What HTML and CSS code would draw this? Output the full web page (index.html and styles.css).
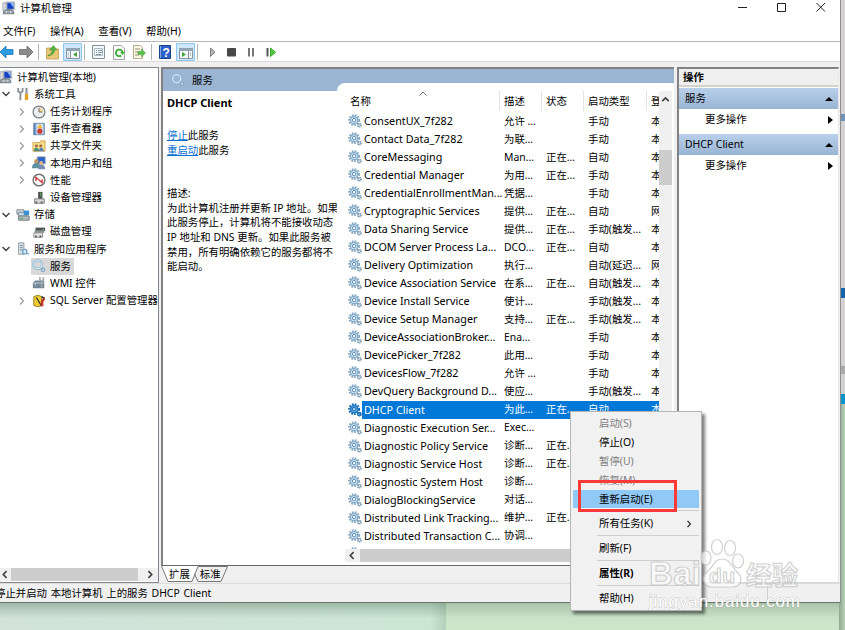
FILE: index.html
```html
<!DOCTYPE html>
<html>
<head>
  <meta charset="UTF-8">
  <title>计算机管理</title>
  <link rel="stylesheet" href="styles.css">
</head>
<body>

  <!-- shared icons -->
  <svg class="defs">
    <symbol id="gear" viewBox="0 0 16 16">
      <circle cx="7" cy="7" r="5.6" fill="none" stroke="#8aa9c0" stroke-width="2.4" stroke-dasharray="1.9 1.4"/>
      <circle cx="7" cy="7" r="4.2" fill="#dcecf7" stroke="#86aecb" stroke-width="1.6"/>
      <circle cx="7" cy="7" r="2" fill="#fff" stroke="#3f78a8"/>
      <circle cx="13" cy="12.8" r="1.9" fill="#d5e5f0" stroke="#6f90aa" stroke-width="1.6" stroke-dasharray="1.2 .5"/>
    </symbol>
    <symbol id="gear-sel" viewBox="0 0 16 16">
      <circle cx="7" cy="7" r="5.6" fill="none" stroke="#1268b0" stroke-width="2.4" stroke-dasharray="1.9 1.4"/>
      <circle cx="7" cy="7" r="4.2" fill="#5fa8df" stroke="#1f78c2" stroke-width="1.6"/>
      <circle cx="7" cy="7" r="2" fill="#a9d4f5" stroke="#0e5ea5"/>
      <circle cx="13" cy="12.8" r="1.9" fill="#5fa8df" stroke="#1268b0" stroke-width="1.6"/>
    </symbol>
    <symbol id="gear-light" viewBox="0 0 16 16">
      <circle cx="6.5" cy="6.5" r="4.8" fill="none" stroke="#86b3d0" stroke-width="2.8"/>
      <circle cx="6.5" cy="6.5" r="4.6" fill="none" stroke="#d6ebf8" stroke-width="1.5"/>
      <circle cx="12.6" cy="12.4" r="2" fill="#c9deec" stroke="#86a8c0" stroke-width="1.4"/>
    </symbol>
    <symbol id="computer" viewBox="0 0 16 16">
      <path d="M1 2h4v9H1z" fill="#d9dcde" stroke="#85898c" stroke-width=".7"/>
      <path d="M5 1h9.500v9H5z" fill="#e1e4e8" stroke="#888" stroke-width=".6"/>
      <path d="M6 2h7.500v7H6z" fill="#1540c0"/>
      <path d="M9 2h4.500v6z" fill="#8db4f4"/>
      <path d="M2 11l3-2h6l3 3v3H1v-3z" fill="#7f8990"/>
      <path d="M3 12.500h9M5 11v3M10 11v3" stroke="#d4dde2"/>
    </symbol>
    <symbol id="open" viewBox="0 0 10 10"><path d="M1.500 3l3.500 3.500L8.500 3" fill="none" stroke="#404040" stroke-width="1.4"/></symbol>
    <symbol id="closed" viewBox="0 0 10 10"><path d="M3 1.500L6.500 5 3 8.500" fill="none" stroke="#9a9a9a" stroke-width="1.2"/></symbol>
  </svg>

  <div class="back-window">
    <div class="strip-top"></div>
    <div class="strip-blue"></div>
    <div class="strip-gray"></div>
    <div class="strip-cyan"></div>
  </div>
  <div class="desktop-left"></div>

  <div class="window">
    <div class="titlebar">
      <svg class="ic"><use href="#computer"/></svg>
      <span>计算机管理</span>
      <svg class="winbtns" viewBox="0 0 90 12" fill="none" stroke="#222">
        <path d="M0 6.500h9"/><path d="M39.500 2.500h8v8h-8z"/><path d="M78.500 2l8.500 8.500M87 2l-8.500 8.500"/>
      </svg>
    </div>
    <div class="menubar"><span>文件(F)</span><span>操作(A)</span><span>查看(V)</span><span>帮助(H)</span></div>

    <div class="toolbar">
      <svg width="290" height="20" viewBox="0 0 290 20">
        <!-- back / forward -->
        <path d="M0 10l6-6v3.500h7v5H6V16z" fill="#2b9be0" stroke="#1c77b8" stroke-width=".8"/>
        <path d="M33 10l-6-6v3.500h-7.500v5H27V16z" fill="#8b8b8b" stroke="#6a6a6a" stroke-width=".8"/>
        <path d="M38.500 2v16M84.500 2v16M151.500 2v16M197.500 2v16" stroke="#b4b4b4"/>
        <!-- up one level -->
        <path d="M46.500 6h5l1 1h6v10h-12z" fill="#e9c877" stroke="#c09a49" stroke-width=".8"/>
        <path d="M48 13q4 0 4-5h-2.500L53.500 3.500 57 8h-2.500q0 5-6.500 6z" fill="#58b447" stroke="#3c8c2d" stroke-width=".5"/>
        <!-- console tree -->
        <path d="M63.500 1.500h18v17h-18z" fill="#d0e7fa" stroke="#8cc5ee"/>
        <path d="M66.500 6.500h13v10h-13z" fill="#f7f9fa" stroke="#8594a0"/>
        <path d="M66 6h14v3H66z" fill="#91a5b4"/><path d="M70.500 9v8M68 11h1M68 13h1M68 15h1" stroke="#7d8f9d"/>
        <path d="M77 10v5l-4-2.500z" fill="#3fa536"/>
        <!-- properties -->
        <path d="M92.500 3.500h12v13h-12z" fill="#f5f8fa" stroke="#82919c"/>
        <path d="M94.500 6.500h8v7h-8z" fill="#fff" stroke="#a9bac7"/>
        <path d="M96 8.500h1M98 8.500h4M96 10.500h1M98 10.500h4M96 12.500h5" stroke="#7f97a9"/>
        <!-- refresh -->
        <path d="M113.500 3.500h8l3 3v11h-11z" fill="#fafafa" stroke="#a5a5a5"/>
        <path d="M122.500 10.500a3.300 3.300 0 1 0-1.300 3" fill="none" stroke="#3aae35" stroke-width="1.8"/><path d="M120 10h5l-2.500 3z" fill="#3aae35"/>
        <!-- export list -->
        <path d="M133.500 3.500h7l2 2v11h-9z" fill="#fcf8e4" stroke="#b5ad8c"/>
        <path d="M135 7h5M135 10h4M135 13h4" stroke="#8e8e79"/>
        <path d="M138 9.500h3.500V7l4 4-4 4v-2.500H138z" fill="#5cc14c" stroke="#379b2a" stroke-width=".5"/>
        <!-- help -->
        <path d="M159.500 3.500h11v13h-11z" fill="#2f62c8" stroke="#1e438d"/><path d="M160.500 4v12" stroke="#8aabe9"/>
        <text x="162.500" y="14.500" class="qmark">?</text>
        <!-- action pane -->
        <path d="M176.500 1.500h18v17h-18z" fill="#d0e7fa" stroke="#8cc5ee"/>
        <path d="M179.500 6.500h13v10h-13z" fill="#f7f9fa" stroke="#8594a0"/>
        <path d="M179 6h14v3h-14z" fill="#91a5b4"/><path d="M188.500 9v8M190 11h1M190 13h1" stroke="#7d8f9d"/>
        <path d="M182 10v5l4-2.500z" fill="#3fa536"/>
        <!-- service controls -->
        <path d="M210.500 6v8.500l4.500-4.200z" fill="#b2b2b2" stroke="#7f7f7f"/>
        <rect x="227" y="6" width="9" height="8.500" rx="1" fill="#474747"/>
        <path d="M249 6v8.500M253 6v8.500" stroke="#777" stroke-width="2"/>
        <path d="M267.500 6v8.500" stroke="#555" stroke-width="2"/><path d="M270.500 6v8.500l5-4.200z" fill="#58cb45" stroke="#36a728"/>
      </svg>
    </div>

    <div class="main">
      <div class="tree">
        <ul>
          <li class="root"><svg class="ic"><use href="#computer"/></svg>计算机管理(本地)</li>
          <li class="l1"><svg class="tw"><use href="#open"/></svg>
            <svg class="ic" viewBox="0 0 16 16"><path d="M2.500 1v4l2.500 2 2.500-2V1M5 7v8" fill="none" stroke="#8d9499" stroke-width="2.200"/><path d="M12 1v7" stroke="#8d9499" stroke-width="2.400"/><path d="M12 8v7" stroke="#e2a321" stroke-width="3.800"/></svg>系统工具</li>
          <li class="l2"><svg class="tw"><use href="#closed"/></svg>
            <svg class="ic" viewBox="0 0 16 16"><circle cx="8" cy="8" r="6.800" fill="#eceff1" stroke="#7b7f83" stroke-width="1.400"/><path d="M8 8h5A5 5 0 0 0 8 3z" fill="#f6d990"/><path d="M8 3.500V8h4" fill="none" stroke="#555"/></svg>任务计划程序</li>
          <li class="l2"><svg class="tw"><use href="#closed"/></svg>
            <svg class="ic" viewBox="0 0 16 16"><path d="M2 1.500h12v13H2z" fill="#7da6d4" stroke="#57789e"/><path d="M5 2h8v12H5z" fill="#d3e4f4"/><path d="M3 3v11" stroke="#355c91" stroke-dasharray="1 1"/><path d="M9 2l3 5H6z" fill="#f1b62d"/><circle cx="9" cy="10.500" r="3" fill="#cc3c35"/></svg>事件查看器</li>
          <li class="l2"><svg class="tw"><use href="#closed"/></svg>
            <svg class="ic" viewBox="0 0 16 16"><path d="M1 4h8l1-2h5v12H1z" fill="#f3d98b" stroke="#c69b3b" stroke-width=".8"/><circle cx="5" cy="8" r="1.700" fill="#a26b3f"/><circle cx="10" cy="8" r="1.700" fill="#a26b3f"/><path d="M2 14q0-4 3-4t3 4z" fill="#4d8d77"/><path d="M8 14q0-4 2.500-4t3 4z" fill="#5680bd"/></svg>共享文件夹</li>
          <li class="l2"><svg class="tw"><use href="#closed"/></svg>
            <svg class="ic" viewBox="0 0 16 16"><path d="M6 1h9v8H6z" fill="#2863cf" stroke="#8b9cab"/><circle cx="5" cy="6" r="2.600" fill="#c19662"/><path d="M0 14q0-6 5-6t5 6z" fill="#5c91a2"/><circle cx="10.500" cy="8" r="2.300" fill="#e0b680"/><path d="M7 15q0-5 4-5t4 5z" fill="#7b8db4"/></svg>本地用户和组</li>
          <li class="l2"><svg class="tw"><use href="#closed"/></svg>
            <svg class="ic" viewBox="0 0 16 16"><circle cx="8" cy="8" r="6.700" fill="#fff" stroke="#777" stroke-width="1.700"/><path d="M4.500 9V5l7 6V7" fill="none" stroke="#ca2f2b" stroke-width="1.500"/></svg>性能</li>
          <li class="l2"><svg class="tw"></svg>
            <svg class="ic" viewBox="0 0 16 16"><path d="M7 1h5v8H7z" fill="#4c5053"/><path d="M10 2v4" stroke="#59c860"/><path d="M3 9h11v5H3z" fill="#d4d7d9" stroke="#777"/><path d="M5 12v2M11 12v2" stroke="#555" stroke-width="2"/></svg>设备管理器</li>
          <li class="l1"><svg class="tw"><use href="#open"/></svg>
            <svg class="ic" viewBox="0 0 16 16"><path d="M1 2h8v5H1z" fill="#cfd3d6" stroke="#808589"/><path d="M3 5h9v6H3z" fill="#c1dae9" stroke="#7b909e"/><path d="M3 9h12v5H3z" fill="#b1b8bc" stroke="#6e7477"/><path d="M9 3h6v5H9z" fill="#378fd4"/><path d="M5 12h3" stroke="#46b84d" stroke-width="1.500"/></svg>存储</li>
          <li class="l2"><svg class="tw"></svg>
            <svg class="ic" viewBox="0 0 16 16"><path d="M4 3h11v4H4z" fill="#4f5356"/><path d="M3 6h11v3H3z" fill="#8a8f92"/><path d="M2 9h10v5H2z" fill="#e4e6e7" stroke="#888"/><path d="M4.500 12v2M9.500 12v2" stroke="#4b4b4b" stroke-width="2"/><path d="M12 5h2" stroke="#59c860"/></svg>磁盘管理</li>
          <li class="l1"><svg class="tw"><use href="#open"/></svg>
            <svg class="ic" viewBox="0 0 16 16"><path d="M3 1h6v13H3z" fill="#dce3e7" stroke="#8496a0"/><path d="M4.500 4h3M4.500 6.500h3M4.500 9h3" stroke="#6c8392"/><circle cx="10" cy="11" r="2.500" fill="#dcecf7" stroke="#6f9fc4" stroke-width="1.500"/><circle cx="14" cy="13.500" r="1.200" fill="#8fb4cf"/></svg>服务和应用程序</li>
          <li class="l2"><svg class="tw"></svg><span class="selected"><svg class="ic"><use href="#gear-light"/></svg>服务</span></li>
          <li class="l2"><svg class="tw"></svg>
            <svg class="ic" viewBox="0 0 16 16"><path d="M1 7l3-2h10v9H1z" fill="#708797"/><path d="M1 8h13M4 8v3" stroke="#c9d5dc"/><path d="M9 1v3l2 2 2-2V1M11 6v7" stroke="#9ea9b0" stroke-width="1.800" fill="none"/></svg>WMI 控件</li>
          <li class="l2"><svg class="tw"><use href="#closed"/></svg>
            <svg class="ic" viewBox="0 0 16 16"><path d="M2 3q5-3 9 0v10q-4 3-9 0z" fill="#f1cd34" stroke="#8f7622"/><path d="M5 4l6 10" stroke="#333" stroke-width="1.500"/><path d="M14 3l-4 5v6h3V9l2-3z" fill="#c43b2c"/><path d="M11 3l3 2" stroke="#333" stroke-width="2"/></svg>SQL Server 配置管理器</li>
        </ul>
        <div class="hscroll">
          <svg viewBox="0 0 10 10"><path d="M6 2L3 5l3 3"/></svg>
          <div class="thumb"></div>
          <svg viewBox="0 0 10 10"><path d="M4 2l3 3-3 3"/></svg>
        </div>
      </div>

      <div class="center">
        <div class="panel">
          <div class="detail">
            <div class="detail-head"><svg class="ic"><use href="#gear-light"/></svg>服务</div>
            <div class="detail-body">
              <h1>DHCP Client</h1>
              <p class="actions"><a>停止</a>此服务<br><a>重启动</a>此服务</p>
              <p>描述:<br>为此计算机注册并更新 IP 地址。如果<br>此服务停止，计算机将不能接收动态<br>IP 地址和 DNS 更新。如果此服务被<br>禁用，所有明确依赖它的服务都将不<br>能启动。</p>
            </div>
          </div>
          <div class="list">
            <div class="list-main">
              <div class="rows">
                <div class="row head">
                  <span>名称<svg class="sort" viewBox="0 0 8 5"><path d="M.5 4.500L4 1l3.500 3.500" fill="none" stroke="#777"/></svg></span>
                  <span>描述</span><span>状态</span><span>启动类型</span><span>登</span>
                </div>
                <div id="services"></div>
              </div>
              <div class="vscroll"><svg viewBox="0 0 10 10"><path d="M2 6.500l3-3 3 3"/></svg><div class="thumb"></div></div>
            </div>
            <div class="hscroll"><svg viewBox="0 0 10 10"><path d="M6 2L3 5l3 3"/></svg><div class="thumb"></div></div>
          </div>
        </div>
        <div class="tabs">
          <svg width="70" height="17" viewBox="0 0 70 17">
            <path d="M0 0l7 15.500h23.500L37 0z" fill="#fff"/>
            <path d="M.5 0L7 15.500h24L37 .5h29.500l-6.500 15H37L33.500 8" fill="none" stroke="#777"/>
          </svg>
          <span>扩展</span><span>标准</span>
        </div>
      </div>

      <div class="side">
        <div class="side-title">操作</div>
        <div class="side-head">服务<i class="up"></i></div>
        <div class="side-item">更多操作<i class="right"></i></div>
        <div class="side-head">DHCP Client<i class="up"></i></div>
        <div class="side-item">更多操作<i class="right"></i></div>
      </div>
    </div>

    <div class="statusbar"><span>停止并启动 本地计算机 上的服务 DHCP Client</span><i></i><i></i></div>
  </div>

  <div class="menu">
    <div class="off">启动(S)</div>
    <div>停止(O)</div>
    <div class="off">暂停(U)</div>
    <div class="off">恢复(M)</div>
    <div class="hot">重新启动(E)</div>
    <hr>
    <div>所有任务(K)<svg viewBox="0 0 10 10"><path d="M3.500 2L6.500 5l-3 3" fill="none" stroke="#333" stroke-width="1.200"/></svg></div>
    <hr>
    <div>刷新(F)</div>
    <hr>
    <div class="bold">属性(R)</div>
    <hr>
    <div>帮助(H)</div>
  </div>
  <div class="mark"></div>

  <svg class="watermark" width="165" height="80" viewBox="0 0 165 80">
    <g class="outline">
      <text x="2" y="50" class="bai" textLength="52">Bai</text>
      <ellipse cx="70" cy="12" rx="5.500" ry="7.500"/>
      <ellipse cx="83" cy="13" rx="5.500" ry="7.500"/>
      <ellipse cx="59" cy="23" rx="5" ry="7"/>
      <ellipse cx="91" cy="26" rx="5.500" ry="7"/>
      <path d="M75 24c-8 0-8 7-14 12-7 6-5 16 5 16h19c9 0 12-9 5-15-6-6-7-13-15-13z"/>
      <text x="62" y="48" class="du" textLength="26">du</text>
      <text x="99" y="50" class="jy" textLength="52">经验</text>
    </g>
    <text x="2" y="72" class="url" textLength="151">jingyan.baidu.com</text>
  </svg>

  <script src="services.js"></script>
</body>
</html>
```
FILE: styles.css
```css
* { box-sizing: border-box; }
body {
  margin: 0;
  width: 845px;
  height: 630px;
  overflow: hidden;
  position: relative;
  background: linear-gradient(#a9c3a9 603px, #cbe3c8 618px, #cee6ca);
  font: 10.4px/15px "Noto Sans", "Noto Sans CJK SC", sans-serif;
  color: #000;
}
.defs { position: absolute; width: 0; height: 0; }
.ic { width: 14px; height: 14px; flex: none; }

/* things behind the window */
.desktop-left { position: absolute; left: 0; top: 603px; width: 446px; height: 27px; background: linear-gradient(90deg, #d2e2da, #cbe6d3 430px, #b4cfba); }
.desktop-left::after { content: ""; display: block; width: 100%; height: 15px; background: linear-gradient(rgba(90, 120, 100, .4), rgba(90, 120, 100, 0)); }
.back-window { position: absolute; left: 839px; top: 0; width: 6px; height: 630px; background: linear-gradient(90deg, #8fa891, #b8d1b6); }
.strip-top { height: 288px; background: linear-gradient(#d4d2d2 114px, #7193b8 114px, #7193b8 121px, #d4d2d2 121px); }
.strip-blue { height: 10px; background: #1164ad; }
.strip-gray { height: 96px; background: linear-gradient(#d4d2d2 68px, #aaa 68px, #aaa 76px, #d0d0d0 76px); }
.strip-cyan { height: 10px; background: #0795cc; }

.window { position: relative; width: 841px; height: 603px; overflow: hidden; background: #f0f0f0; border-right: 1px solid #8f8f8f; border-bottom: 1px solid #6b756b; display: flex; flex-direction: column; }
.titlebar { height: 20px; background: #fff; display: flex; align-items: center; padding: 0 0 4px 2px; }
.titlebar span { margin-left: 4px; }
.winbtns { width: 90px; height: 12px; margin-left: auto; margin-right: 12px; margin-top: -2px; }
.menubar { height: 22px; padding: 4px 3px 0; background: #fff; display: flex; gap: 14.6px; border-bottom: 1px solid #b7b7b7; }
.toolbar { height: 20px; background: #fff; border-bottom: 1px solid #dadada; flex: none; }
.toolbar svg { display: block; margin-top: -0.5px; }
.qmark { font: bold 12px "Liberation Sans", sans-serif; fill: #fff; }

.main { height: 521px; padding-top: 5px; display: flex; flex: none; }

/* console tree */
.tree { width: 159px; height: 516px; background: #fff; border-top: 1px solid #828790; border-right: 1px solid #828790; border-bottom: 1px solid #828790; overflow: hidden; display: flex; flex-direction: column; flex: none; }
.tree ul { list-style: none; margin: 0; padding: 0.6px 0 0; height: 500px; }
.tree li { height: 17.2px; display: flex; align-items: center; white-space: nowrap; }
.tree li .ic { margin-right: 4px; }
.tree .root .ic { margin-left: -1px; }
.tree .tw { width: 10px; height: 10px; margin-right: 5px; flex: none; }
.l1 { padding-left: 1px; }
.l2 { padding-left: 17px; }
.tree .selected { background: #d9d9d9; display: flex; align-items: center; height: 17px; margin-left: -1px; padding: 0 3px 0 1px; }
.hscroll { display: flex; align-items: center; height: 13px; background: #f0f0f0; }
.hscroll svg, .vscroll svg { width: 11px; height: 11px; flex: none; fill: none; stroke: #404040; stroke-width: 1.5; }
.hscroll .thumb { background: #cdcdcd; height: 13px; }
.tree .hscroll { justify-content: space-between; padding-right: 3px; margin-bottom: 1px; }
.tree .hscroll .thumb { width: 127px; margin-right: auto; }

/* services panel */
.center { width: 513px; margin-left: 2px; flex: none; }
.panel { height: 499px; border-top: 2px solid #828282; border-left: 2px solid #828282; border-bottom: 1px solid #696969; background: #9ab4d2; display: flex; }
.detail { width: 174px; background: linear-gradient(#9ab4d2 22px, #fff 22px); }
.detail-head { height: 22px; display: flex; align-items: center; padding-left: 8px; gap: 7px; }
.detail-body { padding: 4px 0 0 4px; white-space: nowrap; line-height: 14.6px; }
.detail-body h1 { font-size: 11px; line-height: 15px; margin: 0 0 18px; }
.detail-body p { margin: 0; }
.detail-body .actions { margin-bottom: 29px; }
.detail-body a { color: #0b6fd0; text-decoration: underline; }
.list { width: 337px; margin-top: 14px; background: #fff; border-radius: 8px 0 0; padding: 8px 1px 0 8px; overflow: hidden; }
.list-main { display: flex; height: 458px; }
.rows { width: 314px; overflow: hidden; }
.row { display: grid; grid-template-columns: 154px 42px 42px 63px 13px; height: 18.04px; align-items: center; white-space: nowrap; overflow: hidden; }
.row span { padding-left: 5px; }
.row .name { display: flex; align-items: center; gap: 1px; padding-left: 3px; font-size: 10.75px; }
.row .name b { font-weight: normal; padding-left: 1px; height: 18px; line-height: 18px; flex: 1; }
.row.head { height: 20px; margin-bottom: 1px; position: relative; }
.row.head span { border-left: 1px solid #e3e3e3; padding-left: 4px; line-height: 20px; }
.row.head span:first-child { border: 0; padding-left: 5px; }
.sort { position: absolute; left: 74px; top: 0; width: 8px; height: 5px; }
.row.active { background: linear-gradient(90deg, #fff 17px, #0078d7 17px); color: #fff; }
.vscroll { width: 13px; background: #f0f0f0; margin-left: 0; }
.vscroll svg { display: block; margin: 3px 1px 1px; }
.vscroll .thumb { height: 35px; margin-top: 45px; background: #cdcdcd; }
.list .hscroll svg { margin: 0 2px; }
.list .hscroll .thumb { width: 300px; }

.tabs { height: 17px; position: relative; display: flex; gap: 10px; padding-left: 8px; }
.tabs svg { position: absolute; left: 0; top: 0; }
.tabs span { position: relative; line-height: 17px; }

/* actions pane */
.side { width: 162px; height: 516px; margin-left: 3px; background: #fff; border-top: 2px solid #828282; border-left: 2px solid #828282; border-bottom: 1px solid #d5d5d5; border-right: 1px solid #e8e8e8; }
.side-title { height: 18px; line-height: 17px; padding-left: 4px; font-weight: bold; background: #f0f0f0; border-bottom: 2px solid #d5d2cc; margin-bottom: 1px; }
.side-head { height: 21px; display: flex; align-items: center; justify-content: space-between; padding: 0 5px 0 6px; background: linear-gradient(#b8d0ea, #9ab4d4); }
.side-item { height: 25px; padding: 0 5px 4px 26px; display: flex; align-items: center; justify-content: space-between; }
.up { border: 4px solid transparent; border-top: 0; border-bottom: 4px solid #000; }
.right { border: 4px solid transparent; border-right: 0; border-left: 5px solid #000; }

.statusbar { height: 19px; display: flex; align-items: center; border-top: 1px solid #dcdcdc; }
.statusbar span { margin-left: -5px; width: 770px; white-space: nowrap; word-spacing: 1px; }
.statusbar i { width: 1px; height: 14px; background: #d0d0d0; margin-right: 72px; }

/* context menu */
.menu { position: absolute; left: 570px; top: 411px; width: 132px; height: 200px; padding: 2px; background: #f1f1f1; border: 1px solid #b5b5b5; box-shadow: 3px 3px 3px rgba(0, 0, 0, .5); }
.menu div { height: 18.9px; line-height: 18.9px; padding-left: 26px; display: flex; justify-content: space-between; align-items: center; }
.menu .off { color: #808080; }
.menu .hot { background: #90c8f6; }
.menu .bold { font-weight: bold; }
.menu svg { width: 10px; height: 10px; margin-right: 5px; }
.menu hr { height: 1px; border: 0; margin: 2px 0 3px 24px; background: #cfcfcf; }
.mark { position: absolute; left: 578px; top: 480px; width: 99px; height: 32px; border: 3px solid #fc3a37; }

.watermark { position: absolute; left: 647px; top: 535px; }
.outline { fill: rgba(255, 255, 255, .65); stroke: rgba(190, 190, 190, .7); stroke-width: 1.2; }
.bai { font: bold 33px "Liberation Sans", sans-serif; }
.du { font: bold 21px "Liberation Sans", sans-serif; }
.jy { font: bold 26px "Noto Sans CJK SC", sans-serif; }
.url { font: 17px "Liberation Sans", sans-serif; fill: #fff; stroke: rgba(170, 170, 170, .6); stroke-width: 1; paint-order: stroke; }
```
FILE: services.js
```js
// name, description, status, startup type, log on as
const services = [
  ["ConsentUX_7f282", "允许 ...", "", "手动", "本"],
  ["Contact Data_7f282", "为联...", "", "手动", "本"],
  ["CoreMessaging", "Man...", "正在...", "自动", "本"],
  ["Credential Manager", "为用...", "正在...", "手动", "本"],
  ["CredentialEnrollmentMan...", "凭据...", "", "手动", "本"],
  ["Cryptographic Services", "提供...", "正在...", "自动", "网"],
  ["Data Sharing Service", "提供...", "正在...", "手动(触发...", "本"],
  ["DCOM Server Process La...", "DCO...", "正在...", "自动", "本"],
  ["Delivery Optimization", "执行...", "", "自动(延迟...", "网"],
  ["Device Association Service", "在系...", "正在...", "自动(触发...", "本"],
  ["Device Install Service", "使计...", "", "手动(触发...", "本"],
  ["Device Setup Manager", "支持...", "正在...", "手动(触发...", "本"],
  ["DeviceAssociationBroker...", "Ena...", "", "手动", "本"],
  ["DevicePicker_7f282", "此用...", "", "手动", "本"],
  ["DevicesFlow_7f282", "允许 ...", "", "手动", "本"],
  ["DevQuery Background D...", "使应...", "", "手动(触发...", "本"],
  ["DHCP Client", "为此...", "正在...", "自动", "本"],
  ["Diagnostic Execution Ser...", "Exec...", "", "", ""],
  ["Diagnostic Policy Service", "诊断...", "正在...", "", ""],
  ["Diagnostic Service Host", "诊断...", "正在...", "", ""],
  ["Diagnostic System Host", "诊断...", "", "", ""],
  ["DialogBlockingService", "对话...", "", "", ""],
  ["Distributed Link Tracking...", "维护...", "正在...", "", ""],
  ["Distributed Transaction C...", "协调...", "", "", ""],
  ["", "", "", "", ""]
];

document.getElementById("services").innerHTML = services.map(function (s) {
  const active = s[0] === "DHCP Client";
  const icon = active ? "gear-sel" : "gear";
  return '<div class="row' + (active ? " active" : "") + '">' +
    '<span class="name"><svg class="ic"><use href="#' + icon + '"/></svg><b>' + s[0] + '</b></span>' +
    s.slice(1).map(function (t) { return "<span>" + t + "</span>"; }).join("") +
    '</div>';
}).join("");
```
